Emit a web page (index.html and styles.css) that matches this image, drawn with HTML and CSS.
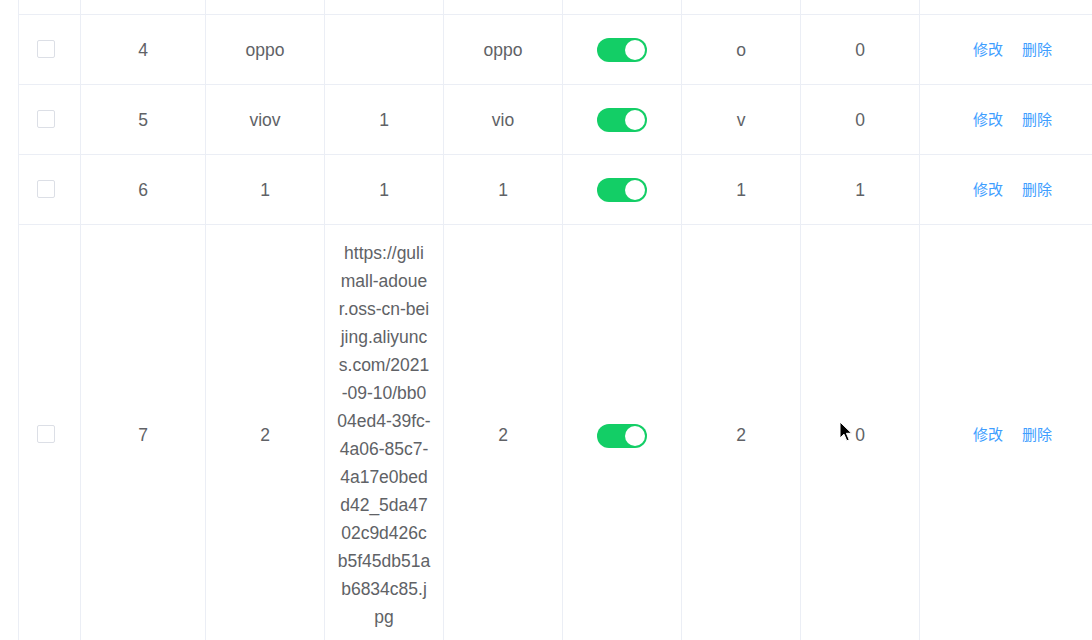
FILE: index.html
```html
<!DOCTYPE html>
<html lang="zh-CN">
<head>
<meta charset="utf-8">
<title>品牌列表</title>
<link rel="stylesheet" href="styles.css">
</head>
<body>
<div class="table">
  <div class="row row-top">
    <div class="cell"></div><div class="cell"></div><div class="cell"></div><div class="cell"></div><div class="cell"></div><div class="cell"></div><div class="cell"></div><div class="cell"></div><div class="cell"></div>
  </div>

  <div class="row">
    <div class="cell cell-check"><span class="checkbox"></span></div>
    <div class="cell">4</div>
    <div class="cell">oppo</div>
    <div class="cell"></div>
    <div class="cell">oppo</div>
    <div class="cell"><span class="switch"><span class="knob"></span></span></div>
    <div class="cell">o</div>
    <div class="cell">0</div>
    <div class="cell cell-ops"><a class="op">修改</a><a class="op">删除</a></div>
  </div>

  <div class="row">
    <div class="cell cell-check"><span class="checkbox"></span></div>
    <div class="cell">5</div>
    <div class="cell">viov</div>
    <div class="cell">1</div>
    <div class="cell">vio</div>
    <div class="cell"><span class="switch"><span class="knob"></span></span></div>
    <div class="cell">v</div>
    <div class="cell">0</div>
    <div class="cell cell-ops"><a class="op">修改</a><a class="op">删除</a></div>
  </div>

  <div class="row">
    <div class="cell cell-check"><span class="checkbox"></span></div>
    <div class="cell">6</div>
    <div class="cell">1</div>
    <div class="cell">1</div>
    <div class="cell">1</div>
    <div class="cell"><span class="switch"><span class="knob"></span></span></div>
    <div class="cell">1</div>
    <div class="cell">1</div>
    <div class="cell cell-ops"><a class="op">修改</a><a class="op">删除</a></div>
  </div>

  <div class="row row-tall">
    <div class="cell cell-check"><span class="checkbox"></span></div>
    <div class="cell">7</div>
    <div class="cell">2</div>
    <div class="cell cell-url">https://guli<br>mall-adoue<br>r.oss-cn-bei<br>jing.aliyunc<br>s.com/2021<br>-09-10/bb0<br>04ed4-39fc-<br>4a06-85c7-<br>4a17e0bed<br>d42_5da47<br>02c9d426c<br>b5f45db51a<br>b6834c85.j<br>pg</div>
    <div class="cell">2</div>
    <div class="cell"><span class="switch"><span class="knob"></span></span></div>
    <div class="cell">2</div>
    <div class="cell">0</div>
    <div class="cell cell-ops"><a class="op">修改</a><a class="op">删除</a></div>
  </div>
</div>

<svg class="cursor" width="14" height="22" viewBox="0 0 14 22" aria-hidden="true">
  <path d="M1 1 L1 17 L5 13.2 L7.8 19.8 L10.2 18.8 L7.4 12.3 L12.6 12.3 Z" fill="#000" stroke="#fff" stroke-width="1" stroke-linejoin="round"/>
</svg>
</body>
</html>
```

FILE: styles.css
```css
html, body {
  margin: 0;
  padding: 0;
  background: #ffffff;
  overflow: hidden;
  height: 640px;
}

body {
  font-family: "Liberation Sans", Arial, "Noto Sans CJK SC", sans-serif;
  font-size: 17.5px;
  color: #606266;
}

.table {
  margin-left: 18px;
  width: 1074px;
}

.row {
  display: grid;
  grid-template-columns: 62px 125px 119px 119px 119px 119px 119px 119px 173px;
  height: 70px;
}

.row-top {
  height: 15px;
}

.row-tall {
  height: auto;
}

.cell {
  border-left: 1px solid #ebeef5;
  border-bottom: 1px solid #ebeef5;
  display: flex;
  align-items: center;
  justify-content: center;
  text-align: center;
  line-height: 28px;
  box-sizing: border-box;
  white-space: nowrap;
}

.row-tall .cell {
  padding: 14px 0;
}

.row .cell-check {
  justify-content: flex-start;
  padding-left: 18px;
}

.checkbox {
  display: block;
  width: 18px;
  height: 18px;
  box-sizing: border-box;
  border: 1px solid #dcdfe6;
  border-radius: 2px;
  background: #fff;
  margin-top: -2px;
}

.switch {
  display: block;
  position: relative;
  width: 50px;
  height: 24px;
  border-radius: 12px;
  background: #13ce66;
  margin-top: 1px;
}

.knob {
  position: absolute;
  top: 2px;
  right: 2px;
  width: 20px;
  height: 20px;
  border-radius: 50%;
  background: #ffffff;
}

.row .cell-ops {
  justify-content: flex-start;
  padding-left: 53px;
  gap: 19px;
}

.op {
  font-family: "Noto Sans CJK SC", "Liberation Sans", sans-serif;
  font-size: 15px;
  color: #409eff;
  cursor: pointer;
  line-height: 20px;
  margin-top: -2px;
}

.cursor {
  position: absolute;
  left: 839px;
  top: 421px;
}
```
